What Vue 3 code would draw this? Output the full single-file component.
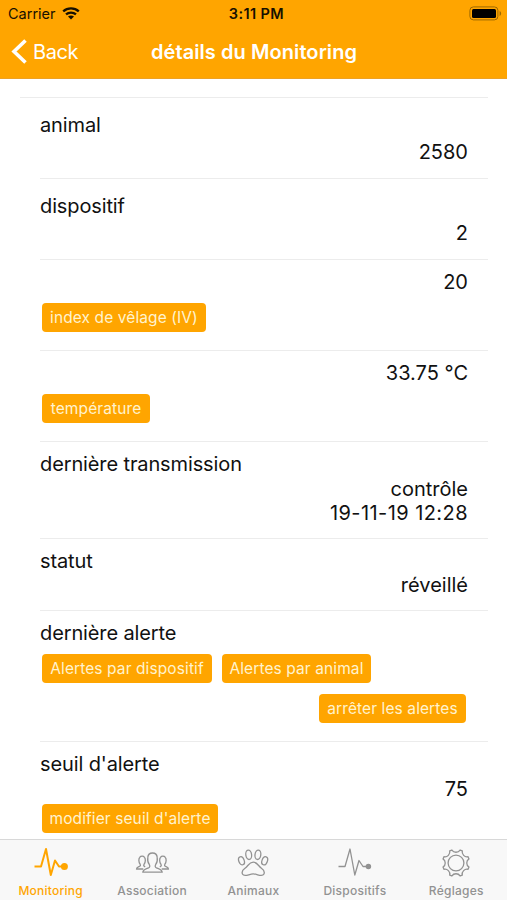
<script setup>
const rows = [
  { height: 81, top: 15, label: 'animal', gap: 3, values: ['2580'] },
  { height: 81, top: 15, label: 'dispositif', gap: 3, values: ['2'] },
  { height: 91, top: 10, values: ['20'], gap: 0, buttons: [{ text: 'index de vêlage (IV)', width: 164 }], buttonGap: 9 },
  { height: 91, top: 10, values: ['33.75 °C'], gap: 0, buttons: [{ text: 'température', width: 108 }], buttonGap: 9 },
  { height: 97, top: 10, label: 'dernière transmission', gap: 1, values: ['contrôle'], date: '19-11-19 12:28' },
  { height: 72, top: 10, label: 'statut', gap: 0, values: ['réveillé'] },
  {
    height: 131, top: 10, label: 'dernière alerte', gap: 0, values: [],
    buttons: [{ text: 'Alertes par dispositif', width: 170 }, { text: 'Alertes par animal', width: 149 }],
    buttonGap: 9,
    action: { text: 'arrêter les alertes', width: 147 },
  },
  { height: 98, top: 10, label: "seuil d'alerte", gap: 1, values: ['75'], buttons: [{ text: "modifier seuil d'alerte", width: 176 }], buttonGap: 3 },
]
const tabs = [
  { name: 'Monitoring', icon: 'pulse', active: true },
  { name: 'Association', icon: 'people' },
  { name: 'Animaux', icon: 'paw' },
  { name: 'Dispositifs', icon: 'pulse' },
  { name: 'Réglages', icon: 'gear' },
]
</script>

<template>
  <div class="screen">
    <header>
      <div class="status">
        <div class="carrier">
          <span>Carrier</span>
          <svg width="18" height="14" viewBox="0 0 18 14">
            <path d="M1.200 4.400C5.600.4 12.400.4 16.800 4.400M4 7.400c2.800-2.500 7.200-2.500 10 0" fill="none" stroke="#171000" stroke-width="2.300" />
            <path d="M6 9.600c1.700-1.500 4.300-1.500 6 0l-3 3z" fill="#171000" />
          </svg>
        </div>
        <span class="time">3:11 PM</span>
        <svg class="battery" width="33" height="15" viewBox="0 0 33 15">
          <rect x=".9" y=".9" width="28" height="13" rx="3.500" fill="none" stroke="#9d6800" stroke-width="1" />
          <rect x="3" y="3" width="24" height="9" rx="1.500" fill="#000" />
          <path d="M30.600 5c2 .7 2 4.300 0 5z" fill="#9d6800" />
        </svg>
      </div>
      <nav class="nav">
        <div class="back">
          <svg width="16" height="26" viewBox="0 0 16 26">
            <path d="M14.500 1.500 3 12.500l11.500 11" fill="none" stroke="#fff" stroke-width="3.600" />
          </svg>
          <span>Back</span>
        </div>
        <h1>détails du Monitoring</h1>
      </nav>
    </header>

    <main>
      <section v-for="(row, i) in rows" :key="i" class="row" :style="{ height: row.height + 'px', paddingTop: row.top + 'px' }">
        <div v-if="row.label" class="label" :style="{ marginBottom: row.gap + 'px' }">{{ row.label }}</div>
        <div v-for="v in row.values" :key="v" class="value">{{ v }}</div>
        <div v-if="row.date" class="value date">{{ row.date }}</div>
        <div v-if="row.buttons" class="buttons" :style="{ marginTop: row.buttonGap + 'px' }">
          <button v-for="b in row.buttons" :key="b.text" :style="{ width: b.width + 'px' }">{{ b.text }}</button>
        </div>
        <div v-if="row.action" class="action">
          <button :style="{ width: row.action.width + 'px' }">{{ row.action.text }}</button>
        </div>
      </section>
    </main>

    <footer>
      <div v-for="tab in tabs" :key="tab.name" class="tab" :class="{ active: tab.active }">
        <svg v-if="tab.icon === 'pulse'" class="icon" viewBox="0 0 36 32">
          <path d="M1.500 20.500h6.500L13 3l4.800 26L22 14.500l4 6h6" />
          <circle cx="31.400" cy="20.500" r="2.100" fill="currentColor" />
        </svg>
        <svg v-else-if="tab.icon === 'people'" class="icon" viewBox="0 0 36 32">
          <path d="M8.800 26.200c.1-2.600 2.200-3 5.700-4.400 1.400-.6 1.600-1.700.9-3.100-1.800-2.300-2-4.400-1.600-7.300C14 8.600 15.800 7 18.500 7s4.500 1.600 4.700 4.400c.4 2.900.2 5-1.600 7.300-.7 1.400-.5 2.500.9 3.100 3.500 1.400 5.600 1.800 5.700 4.400z" />
          <path d="M11.200 20.800c-1.600-.6-1.900-1.400-1-2.800 1.400-1.900 1.500-5.200.3-6.700-1.100-1.500-3.700-1.500-4.800 0-1.200 1.500-1.100 4.800.3 6.700.8 1.300.5 2-.7 2.500-1.700.7-2.700 1-2.800 2.500h6.800M25.800 20.800c1.600-.6 1.900-1.400 1-2.800-1.400-1.900-1.500-5.200-.3-6.700 1.100-1.500 3.700-1.500 4.800 0 1.200 1.500 1.100 4.800-.3 6.700-.8 1.300-.5 2 .7 2.500 1.700.7 2.700 1 2.800 2.500h-6.800" />
        </svg>
        <svg v-else-if="tab.icon === 'paw'" class="icon" viewBox="0 0 36 32">
          <ellipse cx="13.700" cy="8.800" rx="2.900" ry="4.700" transform="rotate(-8 13.700 8.800)" />
          <ellipse cx="22.900" cy="8.800" rx="2.900" ry="4.700" transform="rotate(8 22.900 8.800)" />
          <ellipse cx="6.500" cy="14.800" rx="2.700" ry="4.200" transform="rotate(-20 6.500 14.800)" />
          <ellipse cx="29.700" cy="14.800" rx="2.700" ry="4.200" transform="rotate(20 29.700 14.800)" />
          <path d="M18.200 16.200c-4.200 0-5 3.800-8.200 6.100-2.900 2-3.500 3.900-2.400 6 1.700 3.100 6.700-.4 10.600-.4s8.900 3.500 10.600.4c1.100-2.100.5-4-2.400-6-3.200-2.300-4-6.100-8.200-6.100z" />
        </svg>
        <svg v-else class="icon" viewBox="0 0 36 32">
          <circle cx="18" cy="17" r="7.900" />
          <path d="M13.910 4.030A4.900 4.900 0 0 0 22.090 4.030L24.280 4.940A4.900 4.900 0 0 0 30.060 10.720L30.970 12.910A4.900 4.900 0 0 0 30.970 21.090L30.060 23.280A4.900 4.900 0 0 0 24.280 29.060L22.090 29.970A4.900 4.900 0 0 0 13.910 29.970L11.720 29.060A4.900 4.900 0 0 0 5.940 23.280L5.030 21.090A4.900 4.900 0 0 0 5.030 12.910L5.940 10.720A4.900 4.900 0 0 0 11.720 4.940Z" />
        </svg>
        <span>{{ tab.name }}</span>
      </div>
    </footer>
  </div>
</template>

<style>
body { margin: 0; background: #fff; overflow: hidden; }
</style>

<style scoped>
.screen {
  width: 507px;
  height: 900px;
  display: flex;
  flex-direction: column;
  overflow: hidden;
  background: #fff;
  color: #111;
  font-family: Inter, "Liberation Sans", sans-serif;
}
header { flex: none; height: 79px; background: #ffa500; box-sizing: border-box; border-bottom: 1px solid #eda124; }
.status { height: 27px; display: grid; grid-template-columns: 1fr auto 1fr; align-items: center; padding: 0 5px 0 8px; color: #171000; font-size: 14.500px; }
.carrier { display: flex; align-items: center; gap: 6px; }
.time { font-weight: 600; font-size: 14.500px; letter-spacing: .4px; padding-left: 3px; }
.battery { justify-self: end; }
.nav { height: 50px; display: grid; grid-template-columns: 1fr auto 1fr; align-items: center; padding: 0 10px 0 11px; }
.back { display: flex; align-items: center; gap: 6px; color: #fff; font-size: 20px; letter-spacing: -.4px; }
h1 { margin: 0; color: #fff; font-size: 20px; font-weight: 600; letter-spacing: .08px; white-space: nowrap; }
main { flex: 1; min-height: 0; overflow: hidden; padding: 18px 19px 0 40px; }
.row { box-sizing: border-box; padding-right: 20px; border-top: 1px solid #ececec; }
.row:first-child { margin-left: -20px; padding-left: 20px; }
.label, .value { font-size: 20px; line-height: 24px; letter-spacing: -.12px; white-space: nowrap; }
.value { text-align: right; letter-spacing: 0; }
.date { letter-spacing: .43px; }
.buttons { display: flex; gap: 10px; padding-left: 2px; }
.action { display: flex; justify-content: flex-end; margin: 11px 2px 0 0; }
button { flex: none; height: 29px; padding: 0; border: 0; border-radius: 4px; background: #ffa500; color: #fff3cf; font: 400 15.500px/29px Inter, "Liberation Sans", sans-serif; letter-spacing: .1px; white-space: nowrap; text-align: center; }
footer { flex: none; height: 61px; box-sizing: border-box; display: grid; grid-template-columns: repeat(5, 1fr); border-top: 1px solid #d8d8d8; background: #f8f8f8; }
.tab { display: flex; flex-direction: column; align-items: center; padding-top: 6px; color: #929292; font-size: 12px; font-weight: 500; line-height: 16px; letter-spacing: .25px; }
.icon { width: 36px; height: 32px; margin-bottom: 5px; fill: none; stroke: currentColor; stroke-width: 1.300; stroke-linejoin: round; }
.active { color: #ffa500; }
.active .icon { stroke-width: 2; }
.active circle { r: 2.500px; }
</style>
